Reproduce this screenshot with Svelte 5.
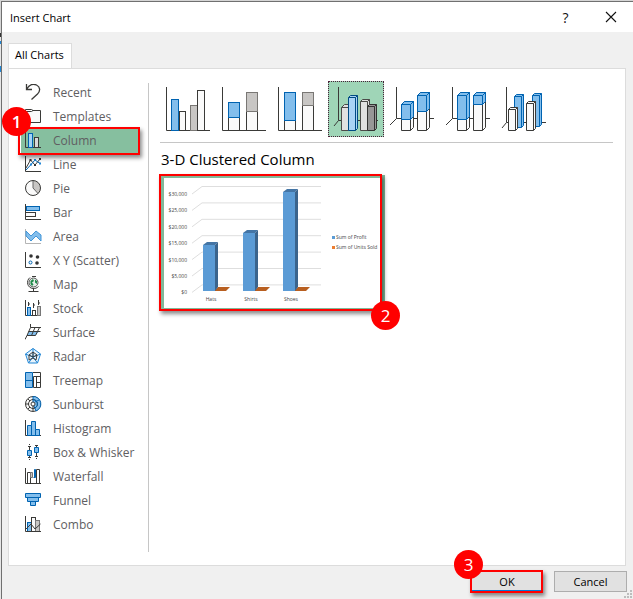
<script lang="ts">
  type Box = { x: number; y: number; w: number; h: number; tone: string };
  type Prism = Box & { d: number; split?: number };
  type ChartType = { name: string; axis: string; boxes: Box[]; prisms: Prism[] };

  const categories = [
    'Recent', 'Templates', 'Column', 'Line', 'Pie', 'Bar', 'Area', 'X Y (Scatter)', 'Map', 'Stock',
    'Surface', 'Radar', 'Treemap', 'Sunburst', 'Histogram', 'Box & Whisker', 'Waterfall', 'Funnel', 'Combo'
  ];

  const flatAxis = 'M6.5 6V49.5H50';
  const deepAxis = 'M12.5 6V37.5H50M12.5 37.5L6 44';

  const chartTypes: ChartType[] = [
    {
      name: 'Clustered Column', axis: flatAxis, prisms: [],
      boxes: [
        { x: 19, y: 30, w: 6, h: 19, tone: 'white' },
        { x: 11, y: 18, w: 7, h: 31, tone: 'blue' },
        { x: 30, y: 24, w: 7, h: 25, tone: 'gray' },
        { x: 37, y: 9, w: 7, h: 40, tone: 'white' }
      ]
    },
    {
      name: 'Stacked Column', axis: flatAxis, prisms: [],
      boxes: [
        { x: 12, y: 36, w: 11, h: 13, tone: 'white' },
        { x: 12, y: 21, w: 11, h: 15, tone: 'blue' },
        { x: 30, y: 30, w: 11, h: 19, tone: 'white' },
        { x: 30, y: 11, w: 11, h: 19, tone: 'gray' }
      ]
    },
    {
      name: '100% Stacked Column', axis: flatAxis, prisms: [],
      boxes: [
        { x: 12, y: 39, w: 11, h: 10, tone: 'white' },
        { x: 12, y: 11, w: 11, h: 28, tone: 'blue' },
        { x: 30, y: 24, w: 11, h: 25, tone: 'white' },
        { x: 30, y: 11, w: 11, h: 13, tone: 'gray' }
      ]
    },
    {
      name: '3-D Clustered Column', axis: 'M10.5 6V39.5H50M10.5 39.5L6 45', boxes: [],
      prisms: [
        { x: 13, y: 26, w: 7, h: 23, d: 3, tone: 'light' },
        { x: 20, y: 16, w: 7, h: 33, d: 2, tone: 'sky' },
        { x: 32, y: 20, w: 7, h: 29, d: 2, tone: 'light' },
        { x: 39, y: 25, w: 7, h: 24, d: 2, tone: 'dark' }
      ]
    },
    {
      name: '3-D Stacked Column', axis: deepAxis, boxes: [],
      prisms: [
        { x: 17, y: 23, w: 9, h: 26, d: 3, tone: 'white', split: 38 },
        { x: 33, y: 14, w: 9, h: 35, d: 3, tone: 'white', split: 30 }
      ]
    },
    {
      name: '3-D 100% Stacked Column', axis: deepAxis, boxes: [],
      prisms: [
        { x: 17, y: 14, w: 9, h: 35, d: 3, tone: 'white', split: 38 },
        { x: 33, y: 14, w: 9, h: 35, d: 3, tone: 'white', split: 23 }
      ]
    },
    {
      name: '3-D Column', axis: 'M10.5 6V41.5H50M10.5 41.5L6 47', boxes: [],
      prisms: [
        { x: 18, y: 15, w: 7, h: 31, d: 2, tone: 'blue' },
        { x: 12, y: 28, w: 7, h: 21, d: 2, tone: 'white' },
        { x: 36, y: 14, w: 7, h: 31, d: 2, tone: 'blue' },
        { x: 30, y: 22, w: 7, h: 27, d: 2, tone: 'white' }
      ]
    }
  ];

  // preview chart data, in sheet order
  const products = [
    { name: 'Hats', x: 44, top: 71 },
    { name: 'Shirts', x: 84, top: 59 },
    { name: 'Shoes', x: 124, top: 18 }
  ];
  const ticks = ['$30,000', '$25,000', '$20,000', '$15,000', '$10,000', '$5,000', '$0'];

  let category = 'Column';
  let chartType = '3-D Clustered Column';

  function prismPath(p: Prism, bottom: number): string {
    const x = p.x + 0.5;
    const y = p.y + 0.5;
    const b = bottom + 0.5;
    return `M${x} ${y}L${x + p.d} ${y - p.d}H${x + p.w + p.d}V${b - p.d}L${x + p.w} ${b}H${x}ZM${x} ${y}H${x + p.w}V${b}M${x + p.w} ${y}L${x + p.w + p.d} ${y - p.d}`;
  }
</script>

<div class="desktop">
  <div class="dialog" role="dialog" aria-labelledby="dialog-title">
    <header class="titlebar">
      <h1 id="dialog-title">Insert Chart</h1>
      <button class="title-btn" aria-label="Help">?</button>
      <button class="title-btn" aria-label="Close">
        <svg width="12" height="12" viewBox="0 0 12 12"><path d="M1 1L11 11M11 1L1 11" stroke="#111" stroke-width="1.1" /></svg>
      </button>
    </header>

    <div class="tabs" role="tablist">
      <button class="tab" role="tab" aria-selected="true">All Charts</button>
    </div>

    <div class="panel">
      <nav class="categories">
        {#each categories as name}
          <button class="category" class:active={category === name} on:click={() => (category = name)}>
            <svg class="icon" width="17" height="17" viewBox="0 0 17 17">
              {#if name === 'Recent'}
                <path class="ln" d="M1.5 0V5.5H7M1.5 5.5C4 1 8-.5 11.500 1C15.500 3 15.500 7 12.500 10L6.500 15.500" stroke-width="1.3" />
              {:else if name === 'Templates'}
                <path class="ln" d="M.5 2.500V14.500H15.500V2.500H8L6.500 1.500H.5V3.500H6.500L8 2.500" fill="#fafafa" />
              {:else if name === 'Column'}
                <path class="ln" d="M.5 0V15.500H16" />
                <rect class="bl" x="3.500" y="1.500" width="4" height="14" fill="#a6d3f5" />
                <rect class="ln" x="9.500" y="5.500" width="4" height="10" fill="#d9d9d9" />
              {:else if name === 'Line'}
                <path class="ln" d="M.5 0V15.500H16M1 12L5.500 4L10 9L15 3" />
                <path class="bl" d="M1 14L6 8.500L10 4L15 7.500" stroke="#2086d5" />
                <path d="M4.500 3h2v2h-2zM9 8h2v2h-2zM14 2h2v2h-2z" fill="#333" />
                <path d="M5 7.500h2v2h-2zM9 3h2v2h-2zM14 6.500h2v2h-2z" fill="#2086d5" />
              {:else if name === 'Pie'}
                <circle cx="8" cy="8" r="7.500" fill="#fafafa" />
                <path d="M8 8V.5A7.500 7.500 0 0 1 13 13.500Z" fill="#c8c6c4" />
                <path d="M8 .5V8L13 13.500" stroke="#666" fill="none" />
                <circle class="ln" cx="8" cy="8" r="7.500" />
              {:else if name === 'Bar'}
                <path class="ln" d="M.5 0V15.500H16" />
                <rect class="bl fill" x="1.500" y="2.500" width="13" height="4" />
                <rect class="ln" x=".5" y="8.500" width="10" height="4" fill="#fafafa" />
              {:else if name === 'Area'}
                <path d="M.5 1V15.500H16" stroke="#b5b5b5" fill="none" />
                <path d="M1 3L6 8L11 3L16 7V13L11 8L6 13L1 8Z" fill="#83beec" stroke="#4396d8" />
              {:else if name === 'X Y (Scatter)'}
                <path class="ln" d="M.5 0V15.500H16" />
                <g fill="#333"><circle cx="6" cy="4" r="1.800" /><circle cx="12.500" cy="5" r="1.800" /><circle cx="12" cy="11" r="1.800" /></g>
                <circle class="bl" cx="5.500" cy="10.500" r="1.500" fill="#fff" />
              {:else if name === 'Map'}
                <circle cx="8.500" cy="6.500" r="4.500" fill="#e6efe9" stroke="#555" />
                <path d="M5.500 5L8 3L9 5L7 6.500L8.500 8.500L7 10L5.500 8ZM10 3.500L12 5L12 8L10 6.500Z" fill="#218a4a" />
                <path class="ln" d="M5 1.500C.5 5 2.500 12 8 12.500C10 12.800 12 12 13.500 10.500M8.500 12.500V15M3.500 15.500H13.500M7 .5H11" />
              {:else if name === 'Stock'}
                <path class="ln" d="M.5 0V15.500H16M3.500 2V6M3.500 4H5M8.500 3V8M8.500 5H10M13.500 0V5M13.500 3H15" />
                <rect class="bl fill" x="2.500" y="7.500" width="3" height="8" />
                <rect class="ln" x="7.500" y="10.500" width="3" height="5" fill="#fff" />
                <rect x="12.500" y="6.500" width="3" height="9" fill="#c8c6c4" stroke="#777" />
              {:else if name === 'Surface'}
                <path d="M4 7.500H14L10 12H1.500Z" fill="#83beec" />
                <path class="ln" d="M5.500 0V3.500H16M5.500 3.500L2 11.500H10.500L14.500 3.500M3.500 7.500H15.500M10 3.500L6.500 11.500M2 11.500L0 15.500" />
              {:else if name === 'Radar'}
                <path d="M8 .5L15.500 6L12.500 15H3.500L.5 6Z" fill="#e9f4fc" stroke="#2086d5" />
                <path d="M8 .5V9L15.500 6M8 9L12.500 15M8 9L3.500 15M8 9L.5 6" stroke="#2086d5" fill="none" />
                <path class="ln" d="M8 4L12 7L11 12L8 10L4 12L4 7ZM4 7L8 9L12 7M8 9V4" />
              {:else if name === 'Treemap'}
                <path class="bl fill" d="M.5 .5H7.500V15.500H.5ZM.5 8.500H7.500" />
                <path class="ln" d="M8 .5H15.500V15.500H8.500V4.500H15.500M11.500 4.500V15.500M11.500 10.500H15.500" />
              {:else if name === 'Sunburst'}
                <circle class="ln" cx="8" cy="8" r="7.500" fill="#fafafa" />
                <path class="bl fill" d="M8 .5A7.500 7.500 0 0 1 11 15L8 8Z" />
                <circle class="ln" cx="8" cy="8" r="4.500" />
                <path class="bl" d="M8 3.500A4.500 4.500 0 0 1 10 12M10 6L14 4" />
                <circle class="ln" cx="8" cy="8" r="2" fill="#fff" />
                <path class="ln" d="M1 8H4M3 13L5 11M3 3L5 5M8 10V15" />
              {:else if name === 'Histogram'}
                <path class="ln" d="M.5 0V15.500H16" />
                <path class="bl fill" d="M2.500 15.500V5.500H6.500V1.500H10.500V9.500H14.500V15.500ZM6.500 5.500V15M10.500 9.500V15" />
              {:else if name === 'Box & Whisker'}
                <path class="ln" d="M4.500 0V1M3 2.500H6M4.500 2.500V13.500M3 13.500H6M4.500 15V16M11.500 1.500V12.500M10 1.500H13M10 12.500H13M11.500 14V15" />
                <path class="bl fill" d="M2.500 6.500H6.500V11.500H2.500ZM9.500 3.500H13.500V8.500H9.500Z" />
              {:else if name === 'Waterfall'}
                <path class="ln" d="M.5 0V15.500H16M2.500 15.500V4.500H5.500V15.500M11.500 15.500V1.500H14.500V15.500" />
                <path d="M5.500 4.500H7.500V9.500H5.500Z" fill="#c8c6c4" stroke="#777" />
                <path class="bl fill" d="M8.500 9.500H10.500V1.500H9.500V9.500" />
              {:else if name === 'Funnel'}
                <path class="bl fill" d="M.5 1.500H15.500V5.500H.5ZM2.500 5.500H13.500V9.500H2.500ZM5.500 9.500H10.500V13.500H5.500Z" />
              {:else}
                <rect class="bl fill" x="2.500" y="6.500" width="4" height="9" />
                <rect class="ln" x="6.500" y="1.500" width="4" height="14" fill="#fafafa" />
                <rect x="10.500" y="4.500" width="4" height="11" fill="#c8c6c4" stroke="#777" />
                <path class="ln" d="M.5 0V15.500H16M1 13L6 8L10 13L15.500 8" />
              {/if}
            </svg>
            <span>{name}</span>
            {#if name === 'Column'}
              <span class="mark mark-category"><b class="badge">1</b></span>
            {/if}
          </button>
        {/each}
      </nav>

      <div class="separator"></div>

      <main>
        <div class="types">
          {#each chartTypes as type}
            <button
              class="type"
              class:selected={chartType === type.name}
              aria-label={type.name}
              on:click={() => (chartType = type.name)}
            >
              <svg width="56" height="56" viewBox="0 0 56 56">
                <path class="axis" d={type.axis} />
                {#each type.boxes as b}
                  <rect class={b.tone} x={b.x + 0.5} y={b.y + 0.5} width={b.w} height={b.h} />
                {/each}
                {#each type.prisms as p}
                  <path class={p.tone} d={prismPath(p, p.y + p.h)} />
                  {#if p.split}
                    <path class="blue" d={prismPath(p, p.split)} />
                  {/if}
                {/each}
              </svg>
            </button>
          {/each}
        </div>

        <h2>{chartType}</h2>

        <div class="preview">
          <svg width="226" height="136" viewBox="0 0 226 136" role="img" aria-label="Sum of Profit and Sum of Units Sold by product">
            <rect x="2" y="1" width="224" height="135" fill="#82b899" />
            <rect x="5" y="4" width="216" height="130" fill="#fff" />
            {#each ticks as tick, i}
              <path d="M33 {20 + i * 16.4}L43 {12.5 + i * 16.4}H162" fill="none" stroke="#dedede" />
              <text x="28" y={22 + i * 16.4} text-anchor="end">{tick}</text>
            {/each}
            {#each products as p}
              <path d="M{p.x + 11} 117L{p.x + 15} 113H{p.x + 27}L{p.x + 23} 117Z" fill="#b85f20" />
              <path d="M{p.x} {p.top}L{p.x + 4} {p.top - 3}H{p.x + 15}L{p.x + 12} {p.top}Z" fill="#4475a5" />
              <path d="M{p.x + 12} {p.top}L{p.x + 15} {p.top - 3}V113L{p.x + 12} 117Z" fill="#3b648c" />
              <rect x={p.x} y={p.top} width="12" height={117 - p.top} fill="#5b9bd5" />
              <text x={p.x + 8} y="127" text-anchor="middle">{p.name}</text>
            {/each}
            <rect x="173" y="62" width="3" height="3" fill="#5b9bd5" />
            <text x="177" y="65">Sum of Profit</text>
            <rect x="173" y="72" width="3" height="3" fill="#ed7d31" />
            <text x="177" y="75">Sum of Units Sold</text>
          </svg>
          <span class="mark mark-preview"><b class="badge">2</b></span>
        </div>
      </main>
    </div>

    <footer>
      <button class="action default">OK<span class="mark mark-ok"><b class="badge">3</b></span></button>
      <button class="action">Cancel</button>
      <svg class="grip" width="8" height="8" viewBox="0 0 8 8"><path d="M6 0h2v2H6zM3 3h2v2H3zM6 3h2v2H6zM0 6h2v2H0zM3 6h2v2H3zM6 6h2v2H6z" fill="#bdbdbd" /></svg>
    </footer>
  </div>
</div>

<style>
  :global(body) {
    margin: 0;
    background: #e6e6e6;
  }

  .desktop {
    padding: 1px 0 0 1px;
    background: linear-gradient(#d5d5d5 33px, #333 33px 37px, #e6e6e6 37px 41px, #2086d5 41px 44px, #e6e6e6 44px 66px, #2086d5 66px 72px, #e6e6e6 72px);
    font-family: "Open Sans", "Noto Sans", sans-serif;
    font-size: 12px;
    color: #111;
  }

  .dialog {
    display: flex;
    flex-direction: column;
    box-sizing: border-box;
    min-height: calc(100vh - 1px);
    border: 1px solid #707070;
    border-width: 1px 0 0 1px;
    background: #f0f0f0;
  }

  button {
    font: inherit;
    color: inherit;
    padding: 0;
    border: 0;
    background: none;
  }

  .titlebar {
    display: flex;
    align-items: center;
    height: 30px;
    padding: 0 0 0 8px;
    background: #fff;
  }

  h1 {
    flex: 1;
    margin: 0;
    font-size: 11px;
    font-weight: 400;
    color: #000;
  }

  .title-btn {
    display: grid;
    place-items: center;
    width: 45px;
    height: 30px;
    font-size: 14px;
  }

  .tabs {
    display: flex;
    margin: 11px 6px 0;
  }

  .tab {
    height: 25px;
    padding: 0 7px 3px 6px;
    border: 1px solid #dcdcdc;
    border-bottom: 0;
    background: #fff;
    font-size: 11px;
    color: #000;
  }

  .panel {
    display: flex;
    flex: 1;
    margin: 0 7px 0 6px;
    padding: 12px 12px 13px;
    border: 1px solid #dcdcdc;
    background: #fff;
  }

  .categories {
    display: flex;
    flex-direction: column;
    width: 117px;
    color: #605e62;
  }

  .category {
    position: relative;
    display: flex;
    align-items: center;
    gap: 11px;
    height: 24px;
    padding: 0 0 1px 4px;
    line-height: 16px;
    text-align: left;
    white-space: nowrap;
  }

  .category.active {
    background: #86bf9f;
  }

  .icon {
    flex: none;
  }

  .ln {
    stroke: #3a3a38;
  }

  .bl {
    stroke: #0063b1;
  }

  .ln:not([fill]),
  .bl:not([fill]) {
    fill: none;
  }

  .bl.fill {
    fill: #83beec;
  }

  .separator {
    width: 1px;
    margin: 2px 11px 0 10px;
    background: #c6c6c6;
  }

  main {
    flex: 1;
    min-width: 0;
  }

  .types {
    display: flex;
    padding-bottom: 5px;
    border-bottom: 1px solid #c6c6c6;
  }

  .type {
    position: relative;
    width: 56px;
    height: 56px;
  }

  .type svg {
    display: block;
  }

  .type.selected {
    background: #9fd5b7;
    outline: 1px dotted #4a2038;
    outline-offset: -1px;
  }

  .axis {
    fill: none;
    stroke: #3a3a38;
  }

  .white {
    fill: #fafafa;
    stroke: #3a3a38;
  }

  .blue {
    fill: #83beec;
    stroke: #0063b1;
  }

  .gray {
    fill: #c8c6c4;
    stroke: #797774;
  }

  .light {
    fill: #e1e1e1;
    stroke: #4a4a48;
  }

  .sky {
    fill: #a9d3f5;
    stroke: #004b83;
  }

  .dark {
    fill: #979797;
    stroke: #333;
  }

  h2 {
    margin: 6px 0 5px 1px;
    font-size: 15px;
    font-weight: 400;
    line-height: 20px;
    color: #000;
  }

  .preview {
    position: relative;
    width: 226px;
    margin-left: -1px;
  }

  .preview svg {
    display: block;
  }

  .preview text {
    font-size: 5px;
    fill: #444;
  }

  .mark {
    position: absolute;
    border: 2px solid #f00;
    box-shadow: 2px 3px 4px rgba(0, 0, 0, 0.45);
    pointer-events: none;
  }

  .badge {
    position: absolute;
    display: grid;
    place-items: center;
    width: 29px;
    height: 29px;
    border-radius: 50%;
    background: #f00;
    color: #fff;
    font-size: 17px;
    font-weight: 400;
  }

  .mark-category {
    inset: -2px -2px -2px -3px;
    z-index: 1;
  }

  .mark-category .badge {
    top: -22px;
    left: -18px;
    font-weight: 600;
  }

  .mark-preview {
    inset: 0 3px -1px 0;
  }

  .mark-preview .badge {
    right: -20px;
    bottom: -21px;
  }

  .mark-ok {
    inset: -2px -1px -3px -2px;
  }

  .mark-ok .badge {
    top: -22px;
    left: -18px;
  }

  footer {
    position: relative;
    display: flex;
    justify-content: flex-end;
    gap: 11px;
    padding: 5px 6px 7px;
  }

  .action {
    position: relative;
    box-sizing: border-box;
    width: 73px;
    height: 21px;
    border: 1px solid #adadad;
    background: #e1e1e1;
    font-size: 11px;
    color: #000;
  }

  .action.default {
    width: 72px;
    border: 1px solid #0078d7;
    border-bottom-width: 2px;
  }

  .grip {
    position: absolute;
    right: 1px;
    bottom: 1px;
  }
</style>
